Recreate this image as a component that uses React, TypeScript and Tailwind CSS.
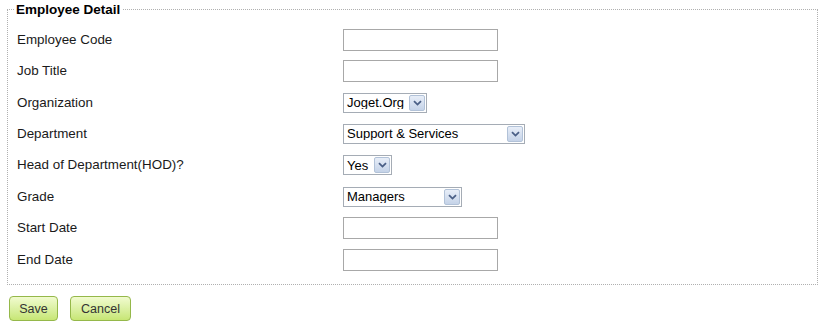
const rows: { label: string; kind: "text" | "select"; value?: string; width?: string }[] = [
  { label: "Employee Code", kind: "text" },
  { label: "Job Title", kind: "text" },
  { label: "Organization", kind: "select", value: "Joget.Org", width: "w-[84px]" },
  { label: "Department", kind: "select", value: "Support & Services", width: "w-[182px]" },
  { label: "Head of Department(HOD)?", kind: "select", value: "Yes", width: "w-[49px]" },
  { label: "Grade", kind: "select", value: "Managers", width: "w-[119px]" },
  { label: "Start Date", kind: "text" },
  { label: "End Date", kind: "text" },
];

const Chevron = () => (
  <svg width="9" height="6" viewBox="0 0 9 6" fill="none">
    <path d="M1 1.2 L4.5 4.6 L8 1.2" stroke="#4a5f86" strokeWidth="1.8" />
  </svg>
);

const FakeSelect = ({ value, width }: { value: string; width: string }) => (
  <div className={`flex h-[20px] items-center border border-[#a5acb5] bg-white ${width}`}>
    <span className="flex-1 truncate pl-[3px] text-[13px] leading-none text-black">{value}</span>
    <span className="mr-[1px] flex h-[16px] w-[16px] items-center justify-center rounded-[2px] border border-[#b2c2d8] bg-gradient-to-b from-[#e8eef8] to-[#c5d3e8]">
      <Chevron />
    </span>
  </div>
);

const App = () => {
  return (
    <div className="h-[333px] w-[825px] bg-white font-['Liberation_Sans',Arial,sans-serif] text-[13px] text-[#1a1a1a]">
      <fieldset className="ml-[7px] mt-[2px] w-[811px] border border-dotted border-[#b0b0b0] pb-[9px] pl-[6px] pt-[7px]">
        <legend className="px-[2px] text-[13.5px] font-bold leading-[15px] text-black">Employee Detail</legend>
        {rows.map((row) => (
          <div key={row.label} className="flex h-[31.43px] items-center">
            <span className="ml-[3px] w-[326px] text-[13.4px]">{row.label}</span>
            {row.kind === "text" ? (
              <div className="h-[22px] w-[155px] border border-[#a8a8a8] bg-white" />
            ) : (
              <FakeSelect value={row.value!} width={row.width!} />
            )}
          </div>
        ))}
      </fieldset>
      <div className="ml-[9px] mt-[11px] flex gap-[12px]">
        <button className="h-[25px] w-[49px] rounded-[4px] border border-[#95b84a] bg-gradient-to-b from-[#f1fbcf] to-[#c7e674] text-[12.5px] text-[#333]">
          Save
        </button>
        <button className="h-[25px] w-[61px] rounded-[4px] border border-[#95b84a] bg-gradient-to-b from-[#f1fbcf] to-[#c7e674] text-[12.5px] text-[#333]">
          Cancel
        </button>
      </div>
    </div>
  );
};

export default App;
